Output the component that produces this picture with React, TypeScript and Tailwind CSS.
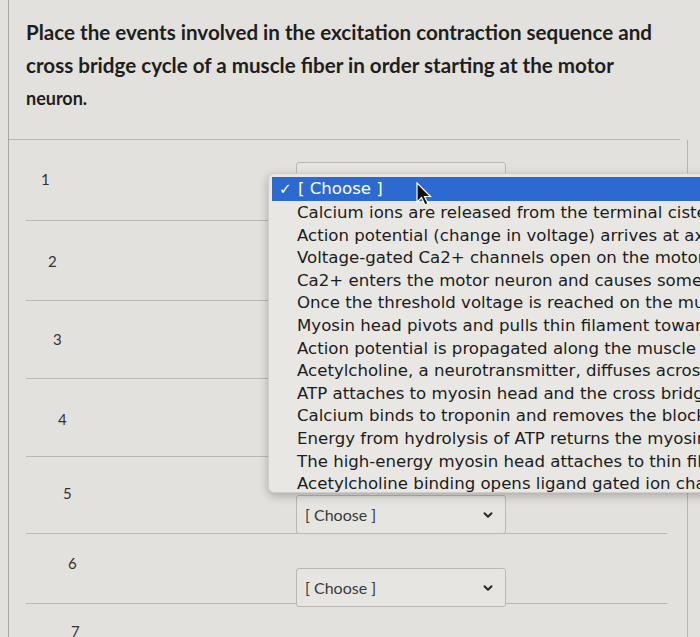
import { ChevronDown } from 'lucide-react';

const options = [
    'Calcium ions are released from the terminal cisternae of the sarcoplasmic reticulum',
    'Action potential (change in voltage) arrives at axon terminal',
    'Voltage-gated Ca2+ channels open on the motor neuron',
    'Ca2+ enters the motor neuron and causes some synaptic vesicles to release',
    'Once the threshold voltage is reached on the muscle fiber',
    'Myosin head pivots and pulls thin filament toward the M line',
    'Action potential is propagated along the muscle cell membrane',
    'Acetylcholine, a neurotransmitter, diffuses across the synaptic cleft',
    'ATP attaches to myosin head and the cross bridge detaches',
    'Calcium binds to troponin and removes the blocking action of tropomyosin',
    'Energy from hydrolysis of ATP returns the myosin head to cocked position',
    'The high-energy myosin head attaches to thin filament',
    'Acetylcholine binding opens ligand gated ion channels',
];

// each answer row: number offset, row height, select offset
const rows = [
    { n: 1, h: 'h-[81px]', num: 'pt-[28px] pl-[15px]', sel: 'pt-[22px]' },
    { n: 2, h: 'h-[80px]', num: 'pt-[29px] pl-[22px]', sel: 'pt-[22px]' },
    { n: 3, h: 'h-[78px]', num: 'pt-[27px] pl-[27px]', sel: 'pt-[22px]' },
    { n: 4, h: 'h-[78px]', num: 'pt-[29px] pl-[32px]', sel: 'pt-[22px]' },
    { n: 5, h: 'h-[77px]', num: 'pt-[25px] pl-[37px]', sel: 'pt-[38px]' },
    { n: 6, h: 'h-[70px]', num: 'pt-[18px] pl-[42px]', sel: 'pt-[34px]' },
    { n: 7, h: 'h-[70px]', num: 'pt-[16px] pl-[45px]', sel: 'pt-[40px]' },
];

function ChooseSelect() {
    return (
        <div className="w-[210px] h-[39px] rounded-[3px] border border-[#b9b8b4] bg-[#e6e5e1] flex items-center justify-between pl-[8px] pr-[10px]">
            <span className="text-[16px] text-[#3a3a3a]">[ Choose ]</span>
            <ChevronDown className="w-[14px] h-[14px] text-[#2a2a2a]" strokeWidth={3.5} />
        </div>
    );
}

function OpenMenu() {
    return (
        <div
            className="absolute left-[268px] top-[173px] w-[460px] h-[320px] rounded-[6px] bg-[#e8e7e3] shadow-[0_3px_10px_rgba(0,0,0,0.25)] border border-[#cfcecb] pt-[3px] overflow-hidden"
            style={{ fontFamily: '"DejaVu Sans", Verdana, sans-serif' }}
        >
            <div className="h-[24px] ml-[3px] bg-[#2c6ad2] text-white flex items-center text-[16.6px]">
                <span className="w-[26px] pl-[7px] text-[15px]">✓</span>
                <span>[ Choose ]</span>
            </div>
            <div className="pl-[28px] pt-[1px] text-[16.6px] leading-[22.6px] text-[#1c1c1c] whitespace-nowrap">
                {options.map((o) => (
                    <div key={o}>{o}</div>
                ))}
            </div>
            {/* mouse pointer */}
            <svg className="absolute left-[146px] top-[8px]" width="18" height="26" viewBox="0 0 18 26">
                <path d="M2 1 L2 20 L6.5 15.5 L10 23 L13 21.5 L9.5 14.5 L15.5 14.5 Z" fill="#111" stroke="#fff" strokeWidth="1.2" />
            </svg>
        </div>
    );
}

export default function App() {
    return (
        <div
            className="relative w-[700px] h-[637px] overflow-hidden bg-[#e2e1dd] text-[#222]"
            style={{ fontFamily: 'Lato, "Open Sans", sans-serif' }}
        >
            <div className="ml-[8px] h-full border-l border-[#a8a7a3] pr-[20px]">
                <div className="pl-[17px] pt-[16px] pb-[24px] border-b border-[#b7b6b2]">
                    <p className="text-[20.6px] font-bold leading-[33px] text-[#1e1e1e] max-w-[650px]">
                        Place the events involved in the excitation contraction sequence and cross bridge cycle of a muscle fiber in order starting at the motor
                    </p>
                    <p className="text-[18px] font-bold leading-[33px] text-[#1e1e1e]">neuron.</p>
                </div>
                <div className="border-r border-[#b7b6b2] mr-[-8px]">
                    {rows.map((r) => (
                        <div key={r.n} className={`${r.h} flex border-b border-[#b9b8b4] ml-[17px] mr-[20px]`}>
                            <div className={`w-[270px] ${r.num} text-[15px] text-[#333]`}>{r.n}</div>
                            <div className={r.sel}>
                                <ChooseSelect />
                            </div>
                        </div>
                    ))}
                </div>
            </div>
            <OpenMenu />
        </div>
    );
}
